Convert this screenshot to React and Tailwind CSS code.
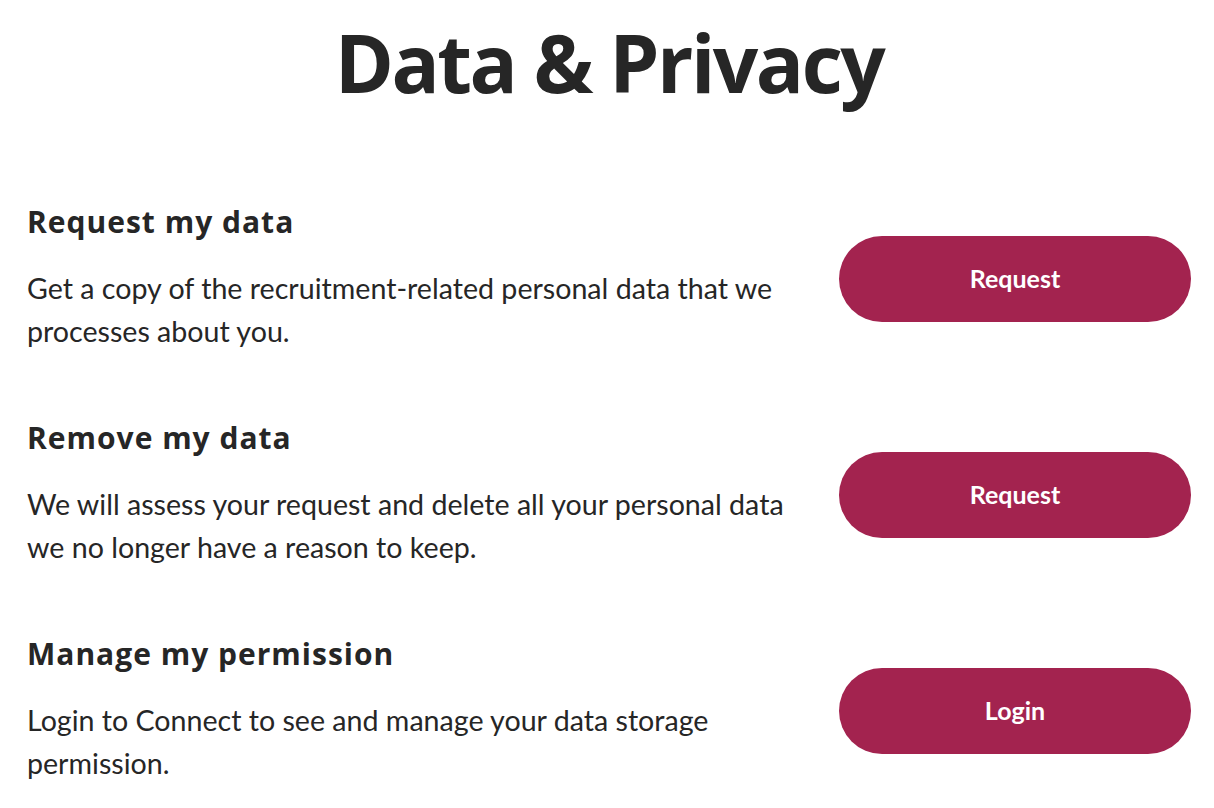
import React from 'react'

const ITEMS = [
  {
    title: 'Request my data',
    text: 'Get a copy of the recruitment-related personal data that we processes about you.',
    action: 'Request',
  },
  {
    title: 'Remove my data',
    text: 'We will assess your request and delete all your personal data we no longer have a reason to keep.',
    action: 'Request',
  },
  {
    title: 'Manage my permission',
    text: 'Login to Connect to see and manage your data storage permission.',
    action: 'Login',
  },
]

function Row({ title, text, action }) {
  return (
    <div className="flex items-center justify-between">
      <div className="w-[790px]">
        <h2 className="font-['Open_Sans',sans-serif] font-bold text-[30px] leading-[36px] text-[#262626] tracking-[1px]">
          {title}
        </h2>
        <p className="mt-[27px] font-['Lato',sans-serif] text-[28.6px] leading-[43px] text-[#262626]">
          {text}
        </p>
      </div>
      <button className="w-[352px] h-[86px] rounded-full bg-[#a3234f] text-white font-['Lato',sans-serif] font-bold text-[25px]">
        {action}
      </button>
    </div>
  )
}

export default function App() {
  return (
    <div className="min-h-[808px] bg-white pl-[27px] pr-[23px]">
      <h1 className="pt-[12px] text-center font-['Open_Sans',sans-serif] font-bold text-[80px] leading-[100px] tracking-[-2.5px] text-[#262626]">
        Data &amp; Privacy
      </h1>
      <div className="mt-[92px] flex flex-col gap-[67px]">
        {ITEMS.map((item, i) => (
          <Row key={i} {...item} />
        ))}
      </div>
    </div>
  )
}
